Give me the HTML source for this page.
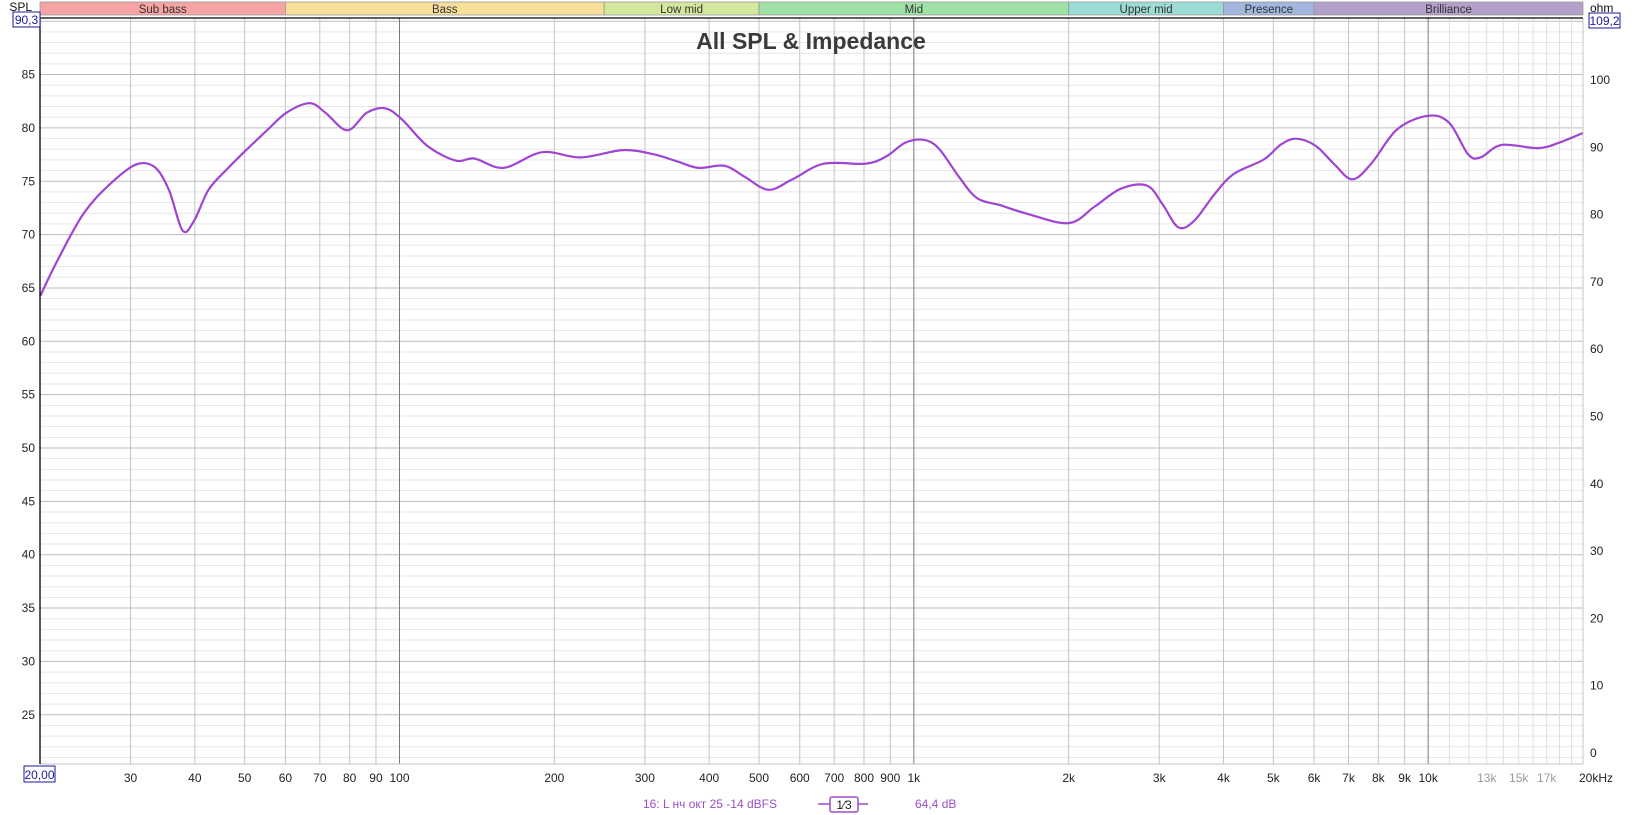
<!DOCTYPE html>
<html><head><meta charset="utf-8"><style>
html,body{margin:0;padding:0;background:#fff;width:1635px;height:815px;overflow:hidden}
svg{display:block}
text{font-family:"Liberation Sans",sans-serif}
</style></head><body>
<svg id="s" width="1635" height="815" xmlns="http://www.w3.org/2000/svg">
<g id="grid"></g>
<g id="bands"></g>
<g id="labels" font-size="12" fill="#222"></g>
<text x="811" y="49" font-size="23" font-weight="bold" fill="#3a3a3a" text-anchor="middle">All SPL &amp; Impedance</text>
<path id="curve" fill="none" stroke="#a044d4" stroke-width="2.2" stroke-linejoin="round" stroke-linecap="round" d=""/>
<line x1="40" y1="18" x2="40" y2="764" stroke="#000" stroke-width="1.3"/>
<line x1="40" y1="18" x2="1583" y2="18" stroke="#000" stroke-width="1.3"/>
<text x="32" y="11" font-size="12" fill="#111" text-anchor="end">SPL</text>
<text x="1590" y="12" font-size="12" fill="#111">ohm</text>
<rect x="13" y="12" width="27" height="15" fill="#fff" stroke="#1a1a9a"/>
<text x="26.5" y="24" font-size="12" fill="#1a1a9a" text-anchor="middle">90,3</text>
<rect x="1589" y="13" width="31" height="15" fill="#fff" stroke="#1a1a9a"/>
<text x="1604.5" y="25" font-size="12" fill="#1a1a9a" text-anchor="middle">109,2</text>
<rect x="24" y="766" width="31" height="16" fill="#fff" stroke="#1a1a9a"/>
<text x="39.5" y="779" font-size="12" fill="#1a1a9a" text-anchor="middle">20,00</text>
<g font-size="12" fill="#9b4fc8">
<text x="777" y="808" text-anchor="end">16: L нч окт 25 -14 dBFS</text>
<line x1="818" y1="804" x2="830" y2="804" stroke="#9b4fc8" stroke-width="1.5"/>
<line x1="858" y1="804" x2="868" y2="804" stroke="#9b4fc8" stroke-width="1.5"/>
<rect x="830" y="797" width="28" height="15" rx="2" fill="#fff" stroke="#9b4fc8" stroke-width="1.5"/>
<text x="844" y="809" text-anchor="middle" fill="#222">1⁄3</text>
<text x="915" y="808">64,4 dB</text>
</g>
</svg>
<script>
var NS="http://www.w3.org/2000/svg";
function el(p,t,a,txt){var e=document.createElementNS(NS,t);for(var k in a)e.setAttribute(k,a[k]);if(txt!==undefined)e.textContent=txt;p.appendChild(e);return e;}
var L=40,R=1583,T=18,B=764;
var dec=(R-L)/3;
function fx(f){return L+Math.log10(f/20)*dec;}
var ppd=10.67;
function dy(db){return T+(90.3-db)*ppd;}
var g=document.getElementById('grid'),lab=document.getElementById('labels'),bd=document.getElementById('bands');
for(var d=21;d<=90;d++){var y=dy(d);if(y>B)continue;
 el(g,'line',{x1:L,x2:R,y1:y,y2:y,stroke:(d%5==0)?'#bdbdbd':'#e6e6e6','stroke-width':1});
 if(d%5==0&&d>=25)el(lab,'text',{x:35,y:y+4,'text-anchor':'end'},String(d));
}
for(var o=0;o<=100;o+=10){var y=753-o*6.73;el(lab,'text',{x:1590,y:y+4},String(o));}
var fr=[20,30,40,50,60,70,80,90,100,200,300,400,500,600,700,800,900,1000,2000,3000,4000,5000,6000,7000,8000,9000,10000];
for(var f=11000;f<=20000;f+=1000)fr.push(f);
fr.forEach(function(f){var x=fx(f);var c='#c4c4c4';if(f==100||f==1000||f==10000)c='#7a7a7a';if(f>10000)c='#dedede';
 if(f>20)el(g,'line',{x1:x,x2:x,y1:T,y2:B,stroke:c,'stroke-width':1});});
el(g,'line',{x1:R,x2:R,y1:T,y2:B,stroke:'#c4c4c4'});
el(g,'line',{x1:L,x2:R,y1:B,y2:B,stroke:'#c4c4c4'});
var xl=[[30,'30'],[40,'40'],[50,'50'],[60,'60'],[70,'70'],[80,'80'],[90,'90'],[100,'100'],[200,'200'],[300,'300'],[400,'400'],[500,'500'],[600,'600'],[700,'700'],[800,'800'],[900,'900'],[1000,'1k'],[2000,'2k'],[3000,'3k'],[4000,'4k'],[5000,'5k'],[6000,'6k'],[7000,'7k'],[8000,'8k'],[9000,'9k'],[10000,'10k'],[13000,'13k',1],[15000,'15k',1],[17000,'17k',1]];
xl.forEach(function(a){el(lab,'text',{x:fx(a[0]),y:782,'text-anchor':'middle',fill:a[2]?'#999':'#222'},a[1]);});
el(lab,'text',{x:fx(20000)+13,y:782,'text-anchor':'middle'},'20kHz');
var bands=[[20,60,'#f6a3a3','Sub bass'],[60,250,'#f7df9b','Bass'],[250,500,'#d4e89d','Low mid'],[500,2000,'#a0e2a6','Mid'],[2000,4000,'#9cdcd6','Upper mid'],[4000,6000,'#a3b6de','Presence'],[6000,20000,'#b3a0ca','Brilliance']];
bands.forEach(function(b){var x1=fx(b[0]),x2=fx(b[1]);el(bd,'rect',{x:x1,y:2,width:x2-x1,height:13,fill:b[2],stroke:'#999','stroke-width':0.8});
 el(bd,'text',{x:(x1+x2)/2,y:13,'text-anchor':'middle','font-size':11.5,fill:'#333'},b[3]);});
var s=1.0427;
var pts=[[39,283],[55,250],[80,205],[105,177],[130,158],[148,160],[162,182],[175,221],[186,212],[200,182],[218,162],[235,145],[255,126],[275,108],[297,99],[312,108],[333,125],[352,108],[370,104],[386,115],[410,140],[437,154],[455,152],[483,161],[520,146],[557,151],[597,144],[627,148],[650,155],[670,161],[695,159],[715,170],[737,182],[760,172],[790,157],[830,157],[850,150],[868,137],[885,134],[900,142],[920,170],[937,190],[960,197],[985,205],[1025,214],[1050,198],[1075,181],[1100,178],[1115,196],[1130,218],[1145,212],[1165,186],[1183,167],[1212,153],[1228,139],[1243,133],[1262,140],[1280,158],[1297,172],[1315,157],[1340,124],[1370,111],[1390,118],[1408,148],[1420,151],[1440,139],[1475,142],[1495,137],[1517,128]];
pts=pts.map(function(p){return [p[0]*s,p[1]*s]});
var dd='M'+pts[0][0].toFixed(1)+','+pts[0][1].toFixed(1);
for(var i=0;i<pts.length-1;i++){var p0=pts[Math.max(0,i-1)],p1=pts[i],p2=pts[i+1],p3=pts[Math.min(pts.length-1,i+2)];
 var c1x=p1[0]+(p2[0]-p0[0])/6,c1y=p1[1]+(p2[1]-p0[1])/6,c2x=p2[0]-(p3[0]-p1[0])/6,c2y=p2[1]-(p3[1]-p1[1])/6;
 dd+=' C'+c1x.toFixed(1)+','+c1y.toFixed(1)+' '+c2x.toFixed(1)+','+c2y.toFixed(1)+' '+p2[0].toFixed(1)+','+p2[1].toFixed(1);}
document.getElementById('curve').setAttribute('d',dd);
</script>
</body></html>
